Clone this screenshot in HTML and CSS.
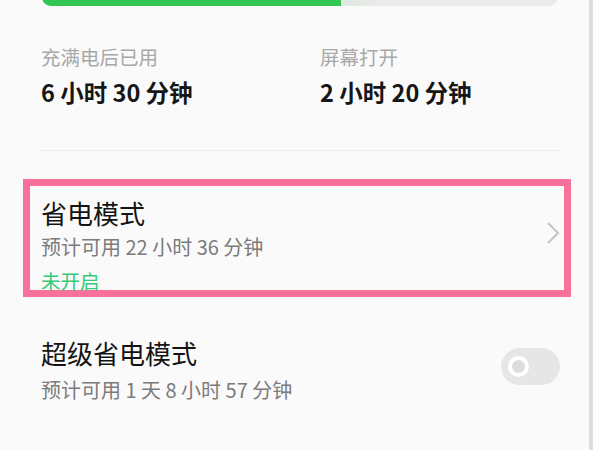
FILE: index.html
```html
<!DOCTYPE html>
<html lang="zh-CN">
<head>
    <meta charset="UTF-8">
    <meta name="viewport" content="width=device-width, initial-scale=1.0">
    <title>电池</title>
    <link rel="stylesheet" href="styles.css">
</head>
<body>

    <div class="screen">
        <div class="battery-bar">
            <div class="battery-fill" style="width: 58%;"></div>
        </div>

        <div class="stats">
            <div class="stat">
                <div class="stat-label">充满电后已用</div>
                <div class="stat-value">6 小时 30 分钟</div>
            </div>
            <div class="stat">
                <div class="stat-label">屏幕打开</div>
                <div class="stat-value">2 小时 20 分钟</div>
            </div>
        </div>

        <div class="divider"></div>

        <div class="mode-box">
            <div class="mode-text">
                <div class="mode-title">省电模式</div>
                <div class="mode-sub">预计可用 22 小时 36 分钟</div>
                <div class="mode-state">未开启</div>
            </div>
            <svg class="chevron" width="14" height="24" viewBox="0 0 14 24">
                <path d="M2 2 L12 12 L2 22" fill="none" stroke="#c4c4c4" stroke-width="2"/>
            </svg>
        </div>

        <div class="super-row">
            <div class="mode-text">
                <div class="mode-title">超级省电模式</div>
                <div class="super-sub">预计可用 1 天 8 小时 57 分钟</div>
            </div>
            <div class="toggle"><span class="knob"></span></div>
        </div>
    </div>

</body>
</html>
```

FILE: styles.css
```css
body { margin: 0; background: #fdfdfd; font-family: "Noto Sans CJK SC", "Noto Sans", sans-serif; overflow: hidden; }
.screen { width: 589px; height: 450px; background: #fafafa; border-right: 4px solid #dedede; overflow: hidden; }

.battery-bar { height: 18px; margin: -12px 31px 0 42px; border-radius: 10px; background: #ebebeb; overflow: hidden; }
.battery-fill { height: 100%; background: #32c653; box-shadow: 20px 0 24px rgba(50, 198, 83, 0.15); }

.stats { display: grid; grid-template-columns: 279px 1fr; margin: 37px 0 0 41px; }
.stat-label { font-size: 19.5px; line-height: 28px; color: #a8a8a8; }
.stat-value { font-size: 23.5px; line-height: 32px; font-weight: 700; color: #161616; margin-top: 5px; }

.divider { height: 1px; background: #ececec; margin: 42px 30px 0 41px; }

.mode-box { display: flex; align-items: center; box-sizing: border-box; height: 118px; margin: 28px 18px 0 23px; padding: 0 4px 0 11px; border: 7px solid #f7719a; }
.mode-box .mode-text { flex: 1; align-self: flex-start; padding-top: 11px; }
.mode-title { font-size: 26px; line-height: 32px; color: #141414; }
.mode-sub { font-size: 20px; line-height: 28px; color: #7b7b7b; margin-top: 4px; }
.mode-state { font-size: 19.5px; line-height: 22px; color: #35c978; margin-top: 9px; }
.chevron { margin-top: -10px; }

.super-row { display: flex; align-items: flex-start; margin: 40px 29px 0 41px; }
.super-row .mode-text { flex: 1; }
.super-sub { font-size: 20px; line-height: 28px; color: #7b7b7b; margin-top: 7px; }

.toggle { width: 59px; height: 37px; border-radius: 19px; background: #e6e6e6; margin-top: 11px; position: relative; }
.knob { position: absolute; left: 7px; top: 8px; width: 13px; height: 13px; border: 4px solid #fff; border-radius: 50%; background: #dcdcdc; }
```
